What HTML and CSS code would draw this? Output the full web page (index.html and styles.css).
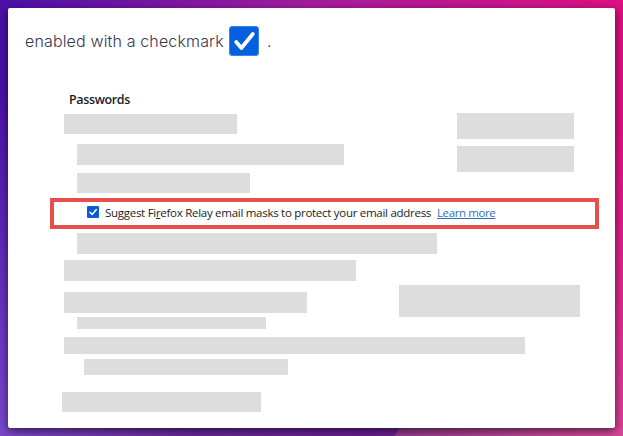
FILE: index.html
```html
<!DOCTYPE html>
<html lang="en">
<head>
    <meta charset="UTF-8">
    <meta name="viewport" content="width=device-width, initial-scale=1.0">
    <title>Firefox Relay Settings</title>
    <link rel="stylesheet" href="styles.css">
</head>
<body>
    <div class="card">
        <p class="intro">
            <span class="intro-text">enabled with a checkmark</span>
            <svg class="check-large" viewBox="0 0 30 30">
                <rect x="0.5" y="0.5" width="29" height="29" rx="2.5" fill="#0560df" stroke="#3c86ea"/>
                <path d="M7.2 16l5.2 6L23.8 8" fill="none" stroke="#fff" stroke-width="3.8" stroke-linecap="round" stroke-linejoin="round"/>
            </svg>
            <span class="intro-dot">.</span>
        </p>

        <div class="settings">
            <h2>Passwords</h2>

            <div class="top">
                <div class="rows">
                    <div class="bar bar-title"></div>
                    <div class="bar bar-option"></div>
                    <div class="bar bar-suboption"></div>
                </div>
                <div class="buttons">
                    <div class="bar bar-button"></div>
                    <div class="bar bar-button"></div>
                </div>
            </div>

            <div class="highlight">
                <svg class="check-small" viewBox="0 0 12 12">
                    <rect width="12" height="12" rx="1.2" fill="#0b5bd3"/>
                    <path d="M3 6.3l2.1 2.2L9.2 3.7" fill="none" stroke="#fff" stroke-width="1.6" stroke-linecap="round" stroke-linejoin="round"/>
                </svg>
                <span class="label">Suggest Fi<u>r</u>efox Relay email masks to protect your email address</span>
                <a class="link" href="#">Learn more</a>
            </div>

            <div class="bar bar-wide"></div>
            <div class="bar bar-section"></div>
            <div class="split">
                <div class="bar bar-field"></div>
                <div class="bar bar-large"></div>
            </div>
            <div class="bar bar-hint"></div>
            <div class="bar bar-full"></div>
            <div class="bar bar-note"></div>
            <div class="bar bar-footer"></div>
        </div>
    </div>
</body>
</html>
```

FILE: styles.css
```css
* {
    box-sizing: border-box;
}

body {
    margin: 0;
    padding: 8px;
    height: 436px;
    overflow: hidden;
    background:
        linear-gradient(120deg, transparent 25.5%, rgba(190, 90, 140, 0.5) 26%, rgba(225, 75, 155, 0.9)) 320px 428px / 303px 8px no-repeat,
        linear-gradient(to right, #7c48c8, #6a2a9c 30%, #6a2090 60%, #78308c) left bottom / 100% 8px no-repeat,
        linear-gradient(to bottom, rgba(130, 80, 210, 0) 20%, rgba(130, 80, 210, 0.85) 100%) left / 8px 100% no-repeat,
        linear-gradient(to bottom, rgba(215, 75, 155, 0) 30%, rgba(215, 75, 155, 0.8) 100%) right / 8px 100% no-repeat,
        linear-gradient(to right, #4a10a8, #a41c9c 50%, #dc1082);
}

/* White card */
.card {
    width: 607px;
    height: 420px;
    background-color: #fff;
    border-radius: 2px;
    box-shadow: 0 3px 8px rgba(0, 0, 0, 0.6);
}

.intro {
    display: flex;
    align-items: center;
    height: 66px;
    margin: 0;
    padding-left: 17px;
    font-family: Inter, sans-serif;
    font-size: 16px;
    font-weight: 300;
    letter-spacing: 0.15px;
    color: #38354e;
}

.intro-text {
    width: 204px;
    white-space: nowrap;
}

.check-large {
    width: 30px;
    height: 30px;
}

.intro-dot {
    margin-left: 8px;
}

/* Settings panel */
.settings {
    padding-left: 56px;
    font-family: "Open Sans", "Noto Sans", sans-serif;
    font-size: 12px;
    color: #1c1b22;
}

h2 {
    margin: 18px 0 5px 5px;
    font-size: 12.5px;
    font-weight: 600;
    line-height: 16px;
    letter-spacing: -0.35px;
}

.top {
    display: flex;
    height: 85px;
}

.rows {
    width: 393px;
    padding-top: 1px;
}

.bar {
    background-color: #ddd;
}

.bar-title {
    width: 173px;
    height: 20px;
}

.bar-option {
    width: 267px;
    height: 21px;
    margin: 10px 0 8px 13px;
}

.bar-suboption {
    width: 173px;
    height: 20px;
    margin-left: 13px;
}

.bar-button {
    width: 117px;
    height: 26px;
    margin-bottom: 7px;
}

.highlight {
    display: flex;
    align-items: center;
    width: 549px;
    height: 31px;
    margin-left: -14px;
    padding: 0 0 3px 33px;
    border: 4px solid #e5504d;
    white-space: nowrap;
}

.check-small {
    width: 12px;
    height: 12px;
    margin-right: 6px;
}

.label {
    width: 332px;
    font-size: 11.5px;
    letter-spacing: -0.28px;
}

.link {
    font-size: 11.5px;
    letter-spacing: -0.4px;
    color: #2f6fc4;
}

.bar-wide {
    width: 360px;
    height: 21px;
    margin: 4px 0 6px 13px;
}

.bar-section {
    width: 292px;
    height: 21px;
}

.split {
    display: flex;
    align-items: flex-start;
    height: 32px;
    margin-top: 4px;
}

.bar-field {
    width: 243px;
    height: 21px;
    margin: 7px 92px 0 0;
}

.bar-large {
    width: 181px;
    height: 32px;
}

.bar-hint {
    width: 189px;
    height: 12px;
    margin-left: 13px;
}

.bar-full {
    width: 461px;
    height: 17px;
    margin-top: 8px;
}

.bar-note {
    width: 204px;
    height: 16px;
    margin: 5px 0 0 20px;
}

.bar-footer {
    width: 199px;
    height: 20px;
    margin: 17px 0 0 -2px;
}
```
